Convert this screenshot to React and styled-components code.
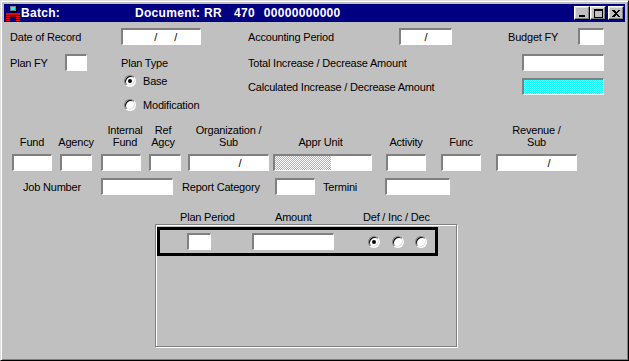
import React, { useId } from 'react';
import styled, { createGlobalStyle, css } from 'styled-components';

const GlobalStyle = createGlobalStyle`
  html, body {
    margin: 0;
    padding: 0;
    background: #c0c0c0;
  }
  body {
    font-family: "Liberation Sans", Arial, sans-serif;
    font-size: 11px;
    letter-spacing: -0.2px;
    color: #000;
  }
`;

const Window = styled.div`
  width: 629px;
  height: 361px;
  box-sizing: border-box;
  background: #c0c0c0;
  border: 1px solid;
  border-color: #dfdfdf #000 #000 #dfdfdf;
  box-shadow: inset 1px 1px #fff, inset -1px -1px #808080;
  padding: 3px;
  display: flex;
  flex-direction: column;
`;

const TitleBar = styled.div`
  height: 18px;
  background: #000080;
  color: #fff;
  display: flex;
  align-items: center;
  padding: 0 1px;
  font-weight: bold;
  font-size: 12px;
  letter-spacing: 0.3px;
  white-space: pre;
`;

const TitleCaption = styled.span`
  flex: none;
  width: 114px;
`;

const TitlePart = styled.span`
  flex: none;
  margin-left: ${p => p.gap || 0}px;
`;

const TitleButtons = styled.div`
  margin-left: auto;
  display: flex;
  align-items: center;
  gap: 0;
`;

const TitleButton = styled.div`
  width: 16px;
  height: 14px;
  box-sizing: border-box;
  background: #c0c0c0;
  border: 1px solid;
  border-color: #fff #000 #000 #fff;
  box-shadow: inset -1px -1px #808080, inset 1px 1px #dfdfdf;
  display: flex;
  align-items: center;
  justify-content: center;
  ${p => p.close && css`margin-left: 2px;`}
`;

const Client = styled.div`
  flex: 1;
  display: flex;
  flex-direction: column;
`;

const HeaderArea = styled.div`
  display: grid;
  grid-template-columns: 244px 356px;
  margin-top: 6px;
`;

const LeftBlock = styled.div`
  display: flex;
  flex-direction: column;
  padding-left: 6px;
`;

const RightBlock = styled.div`
  display: flex;
  flex-direction: column;
`;

const FormRow = styled.div`
  display: flex;
  align-items: center;
  height: 17px;
  margin-top: ${p => p.mt || 0}px;
  padding-left: ${p => p.pl || 0}px;
`;

const FieldLabel = styled.span`
  flex: none;
  width: ${p => (p.w ? `${p.w}px` : 'auto')};
  margin-left: ${p => p.ml || 0}px;
  white-space: nowrap;
`;

const TextField = styled.div`
  flex: none;
  box-sizing: border-box;
  width: ${p => p.w}px;
  height: 17px;
  margin-left: ${p => (p.pushRight ? 'auto' : `${p.ml || 0}px`)};
  background: #fff;
  border-style: solid;
  border-width: 2px 1px 1px 2px;
  border-color: #808080 #fff #fff #808080;
  display: flex;
  align-items: center;
  justify-content: center;
  overflow: hidden;
`;

const DitherFill = styled.svg`
  flex: none;
  align-self: stretch;
  height: 100%;
  width: ${p => (p.w ? `${p.w}px` : '100%')};
  margin-right: auto;
  display: block;
`;

const Slash = styled.span`
  white-space: pre;
  margin-left: ${p => p.offset || 0}px;
`;

const RadioOption = styled.label`
  display: flex;
  align-items: center;
  height: 16px;
  margin-top: ${p => p.mt || 0}px;
  margin-left: 114px;
`;

const RadioDot = styled.span`
  flex: none;
  display: inline-block;
  width: 12px;
  height: 12px;
  box-sizing: border-box;
  border-radius: 50%;
  background: #fff;
  border: 1px solid;
  border-color: #808080 #fff #fff #808080;
  box-shadow: inset 1px 1px #000, inset -1px -1px #dfdfdf;
  position: relative;
  margin-left: ${p => p.ml || 0}px;
  ${p => p.checked && css`
    &::after {
      content: '';
      position: absolute;
      left: 3px;
      top: 3px;
      width: 4px;
      height: 4px;
      border-radius: 50%;
      background: #000;
    }
  `}
`;

const RadioText = styled.span`
  margin-left: 7px;
`;

const CodeRow = styled.div`
  display: flex;
  margin-top: 11px;
  padding-left: 8px;
`;

const CodeColumn = styled.div`
  display: flex;
  flex-direction: column;
  align-items: center;
  width: ${p => p.w}px;
  margin-left: ${p => p.ml || 0}px;
`;

const ColumnCaption = styled.div`
  height: 24px;
  line-height: 12px;
  display: flex;
  flex-direction: column;
  justify-content: flex-end;
  align-items: center;
  text-align: center;
  white-space: nowrap;
  margin-bottom: 6px;
  transform: translateX(${p => p.shift || 0}px);
`;

const JobRow = styled(FormRow)`
  margin-top: 7px;
  padding-left: 19px;
`;

const PanelHead = styled.div`
  display: grid;
  grid-template-columns: 95px 88px auto;
  margin-top: 16px;
  padding-left: 176px;
  height: 12px;
  line-height: 12px;
  white-space: nowrap;
`;

const PlanPanel = styled.div`
  margin-top: 1px;
  margin-left: 151px;
  width: 302px;
  height: 123px;
  box-sizing: border-box;
  border: 1px solid #808080;
  box-shadow: 1px 1px 0 #fff, inset 1px 1px 0 #fff;
  padding: 2px 0 0 1px;
`;

const PlanBox = styled.div`
  width: 281px;
  height: 29px;
  box-sizing: border-box;
  border: 3px solid #000;
  display: flex;
  align-items: center;
`;

function Dither({ w }) {
  const id = useId().replace(/:/g, '');
  return (
    <DitherFill w={w} shapeRendering="crispEdges">
      <defs>
        <pattern id={id} width="2" height="2" patternUnits="userSpaceOnUse">
          <rect width="2" height="2" fill="#fff" />
          <rect x="0" y="0" width="1" height="1" fill="#00ffff" />
          <rect x="1" y="1" width="1" height="1" fill="#00ffff" />
        </pattern>
      </defs>
      <rect width="100%" height="100%" fill={`url(#${id})`} />
    </DitherFill>
  );
}

function AppIcon() {
  return (
    <svg width="16" height="16" viewBox="0 0 16 16" shapeRendering="crispEdges">
      <rect x="4" y="0" width="8" height="7" fill="#000" />
      <rect x="5" y="1" width="6" height="5" fill="#808080" />
      <rect x="6" y="2" width="4" height="3" fill="#00ffff" />
      <rect x="6" y="7" width="4" height="1" fill="#000" />
      <rect x="0" y="8" width="16" height="3" fill="#000" />
      <rect x="1" y="8" width="14" height="2" fill="#ff0000" />
      <rect x="1" y="11" width="4" height="5" fill="#ff0000" />
      <rect x="11" y="11" width="4" height="5" fill="#ff0000" />
      <rect x="1" y="12" width="4" height="1" fill="#000" />
      <rect x="1" y="14" width="4" height="1" fill="#000" />
      <rect x="11" y="12" width="4" height="1" fill="#000" />
      <rect x="11" y="14" width="4" height="1" fill="#000" />
      <rect x="5" y="11" width="6" height="1" fill="#800000" />
    </svg>
  );
}

function MinGlyph() {
  return (
    <svg width="8" height="8" viewBox="0 0 8 8" shapeRendering="crispEdges">
      <rect x="1" y="6" width="6" height="2" fill="#000" />
    </svg>
  );
}

function MaxGlyph() {
  return (
    <svg width="9" height="9" viewBox="0 0 9 9" shapeRendering="crispEdges">
      <rect x="0.5" y="0.5" width="8" height="8" fill="none" stroke="#000" />
      <rect x="0" y="1" width="9" height="1" fill="#000" />
    </svg>
  );
}

function CloseGlyph() {
  return (
    <svg width="8" height="7" viewBox="0 0 8 7" shapeRendering="crispEdges">
      <path d="M0 0h2l2 2 2-2h2L5 3.5 8 7H6L4 5 2 7H0l3-3.5z" fill="#000" />
    </svg>
  );
}

// widths and spacing of the code fields, left to right
const codeFields = [
  { label: ['Fund'], w: 40, ml: 0 },
  { label: ['Agency'], w: 32, ml: 8 },
  { label: ['Internal', 'Fund'], w: 40, ml: 9, shift: 4 },
  { label: ['Ref', 'Agcy'], w: 32, ml: 8, shift: -2 },
  { label: ['Organization /', 'Sub'], w: 81, ml: 7, slash: 22 },
  { label: ['Appr Unit'], w: 99, ml: 4, dither: 56, shift: -2 },
  { label: ['Activity'], w: 40, ml: 14 },
  { label: ['Func'], w: 40, ml: 15 },
  { label: ['Revenue /', 'Sub'], w: 81, ml: 15, slash: 24 },
];

export default function App() {
  return (
    <>
      <GlobalStyle />
      <Window>
        <TitleBar>
          <AppIcon />
          <TitleCaption>Batch:</TitleCaption>
          <TitlePart>Document: RR</TitlePart>
          <TitlePart gap={12}>470</TitlePart>
          <TitlePart gap={9}>00000000000</TitlePart>
          <TitleButtons>
            <TitleButton><MinGlyph /></TitleButton>
            <TitleButton><MaxGlyph /></TitleButton>
            <TitleButton close><CloseGlyph /></TitleButton>
          </TitleButtons>
        </TitleBar>

        <Client>
          <HeaderArea>
            <LeftBlock>
              <FormRow>
                <FieldLabel w={111}>Date of Record</FieldLabel>
                <TextField w={80}>
                  <Slash>{'   /      /'}</Slash>
                </TextField>
              </FormRow>
              <FormRow mt={9}>
                <FieldLabel w={55}>Plan FY</FieldLabel>
                <TextField w={22} />
                <FieldLabel ml={34}>Plan Type</FieldLabel>
              </FormRow>
              <RadioOption mt={2}>
                <RadioDot checked />
                <RadioText>Base</RadioText>
              </RadioOption>
              <RadioOption mt={8}>
                <RadioDot />
                <RadioText>Modification</RadioText>
              </RadioOption>
            </LeftBlock>

            <RightBlock>
              <FormRow>
                <FieldLabel w={151}>Accounting Period</FieldLabel>
                <TextField w={53}>
                  <Slash>/</Slash>
                </TextField>
                <FieldLabel ml={56} w={70}>Budget FY</FieldLabel>
                <TextField w={26} />
              </FormRow>
              <FormRow mt={9}>
                <FieldLabel>Total Increase / Decrease Amount</FieldLabel>
                <TextField w={82} pushRight />
              </FormRow>
              <FormRow mt={7}>
                <FieldLabel>Calculated Increase / Decrease Amount</FieldLabel>
                <TextField w={82} pushRight>
                  <Dither />
                </TextField>
              </FormRow>
            </RightBlock>
          </HeaderArea>

          <CodeRow>
            {codeFields.map(f => (
              <CodeColumn key={f.label.join(' ')} w={f.w} ml={f.ml}>
                <ColumnCaption shift={f.shift}>
                  {f.label.map(line => (
                    <span key={line}>{line}</span>
                  ))}
                </ColumnCaption>
                <TextField w={f.w}>
                  {f.dither && <Dither w={f.dither} />}
                  {f.slash && <Slash offset={f.slash}>/</Slash>}
                </TextField>
              </CodeColumn>
            ))}
          </CodeRow>

          <JobRow>
            <FieldLabel w={78}>Job Number</FieldLabel>
            <TextField w={72} />
            <FieldLabel ml={9} w={93}>Report Category</FieldLabel>
            <TextField w={40} />
            <FieldLabel ml={8} w={62}>Termini</FieldLabel>
            <TextField w={65} />
          </JobRow>

          <PanelHead>
            <span>Plan Period</span>
            <span>Amount</span>
            <span>Def / Inc / Dec</span>
          </PanelHead>

          <PlanPanel>
            <PlanBox>
              <TextField w={24} ml={27} />
              <TextField w={82} ml={41} />
              <RadioDot checked ml={34} />
              <RadioDot ml={12} />
              <RadioDot ml={11} />
            </PlanBox>
          </PlanPanel>
        </Client>
      </Window>
    </>
  );
}
